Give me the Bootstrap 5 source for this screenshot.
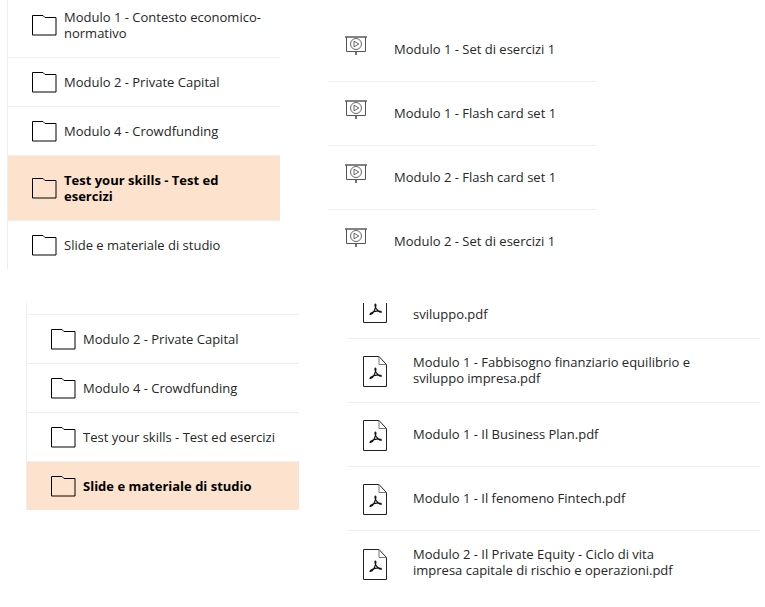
<!DOCTYPE html>
<html lang="it">
<head>
  <meta charset="UTF-8" />
  <meta name="viewport" content="width=device-width, initial-scale=1.0" />
  <title>Materiali del corso</title>
  <link href="https://cdn.jsdelivr.net/npm/bootstrap@5.3.3/dist/css/bootstrap.min.css" rel="stylesheet" />
  <style>
    body {
      background: #fff;
      font-family: "Open Sans", "Liberation Sans", sans-serif;
      font-size: 13px;
      line-height: 16px;
      color: #262626;
      overflow: hidden;
    }

    .collage { height: 607px; overflow: hidden; }
    .col-left { width: 292px; margin-left: 7px; flex: none; }
    .col-right { margin-left: 29px; flex: none; }

    /* pannelli */
    .panel-a { width: 273px; margin-top: -7px; border-left: 1px solid #eee; }
    .panel-b { width: 273px; margin-left: 19px; margin-top: 34px; border-left: 1px solid #eee; }
    .panel-c { width: 268px; margin-top: 18px; }
    .panel-d { width: 413px; margin-left: 19px; margin-top: 29px; }

    .row-item {
      display: flex;
      align-items: center;
      background: transparent;
      color: #262626;
      border: 0;
      border-bottom: 1px solid #eee;
      border-radius: 0;
      padding: 16px 10px 16px 24px;
    }
    .row-item.is-active { background: #fde3cd; color: #000; font-weight: 700; }
    .row-stub { height: 12px; border-bottom: 1px solid #eee; }

    .icon-folder { width: 25px; height: 21px; flex: none; margin: -3px 7px -3px 0; }

    .row-tool { height: 64px; padding: 0 0 2px 17px; }
    .icon-tool { width: 24px; height: 20px; flex: none; margin-right: 26px; margin-top: -6px; margin-left: -1px; }

    .row-pdf { height: 64px; padding: 0 0 2px 16px; }
    .icon-pdf { width: 24px; height: 31px; flex: none; margin: 4px 26px 0 0; }
    .pdf-text { max-width: 288px; }
    .pdf-tail { padding-top: 18px; }
    .clip-first { height: 36px; overflow: hidden; border-bottom: 1px solid #eee; }
    .clip-first .row-pdf { margin-top: -29px; border-bottom: 0; }
  </style>
</head>
<body>

<svg class="d-none" xmlns="http://www.w3.org/2000/svg">
  <symbol id="folder" viewBox="0 0 25 21">
    <path d="M.5.5H11L13 2.500H24V20H.5Z" fill="none" stroke="#000" />
  </symbol>
  <symbol id="tool" viewBox="0 0 24 20">
    <path d="M1 1H23" stroke="#333" stroke-width="1.2" />
    <path d="M2.500 1V15.500H21.500V1" fill="none" stroke="#555" />
    <circle cx="12" cy="8" r="5.500" fill="none" stroke="#666" />
    <path d="M10 5.200V10.800L14.800 8Z" fill="none" stroke="#555" stroke-width=".9" />
    <path d="M12 16V19" stroke="#333" stroke-width="1.4" />
  </symbol>
  <symbol id="pdf" viewBox="0 0 24 31">
    <path d="M.5.5H16L23.500 8.500V30.500H.5Z" fill="none" stroke="#222" />
    <path d="M16 .5V8.500H23.500" fill="none" stroke="#777" />
    <path d="M7.500 22.500C9 22 11.500 19 12.500 15.500C12 14 11.500 12.500 12.300 12C13.200 12.300 13 14 12.500 15.500C13.500 17.500 15 18.800 16 19C17.500 19.200 18.500 19.300 18.500 20C17.500 20.800 16 19.800 15 18.900C12.500 19 9.500 19.800 7.500 21.500C7 22 7 22.700 7.500 22.500Z" fill="none" stroke="#111" stroke-width="1.1" stroke-linejoin="round" />
  </symbol>
</svg>

<div class="collage d-flex">
  <div class="col-left">
    <div class="panel-a list-group list-group-flush">
      <a class="list-group-item row-item"><svg class="icon-folder"><use href="#folder" /></svg><span>Modulo 1 - Contesto economico-normativo</span></a>
      <a class="list-group-item row-item"><svg class="icon-folder"><use href="#folder" /></svg><span>Modulo 2 - Private Capital</span></a>
      <a class="list-group-item row-item"><svg class="icon-folder"><use href="#folder" /></svg><span>Modulo 4 - Crowdfunding</span></a>
      <a class="list-group-item row-item is-active"><svg class="icon-folder"><use href="#folder" /></svg><span>Test your skills - Test ed esercizi</span></a>
      <a class="list-group-item row-item"><svg class="icon-folder"><use href="#folder" /></svg><span>Slide e materiale di studio</span></a>
    </div>
    <div class="panel-b list-group list-group-flush">
      <div class="row-stub"></div>
      <a class="list-group-item row-item"><svg class="icon-folder"><use href="#folder" /></svg><span>Modulo 2 - Private Capital</span></a>
      <a class="list-group-item row-item"><svg class="icon-folder"><use href="#folder" /></svg><span>Modulo 4 - Crowdfunding</span></a>
      <a class="list-group-item row-item"><svg class="icon-folder"><use href="#folder" /></svg><span>Test your skills - Test ed esercizi</span></a>
      <a class="list-group-item row-item is-active"><svg class="icon-folder"><use href="#folder" /></svg><span>Slide e materiale di studio</span></a>
    </div>
  </div>
  <div class="col-right">
    <div class="panel-c list-group list-group-flush">
      <a class="list-group-item row-item row-tool"><svg class="icon-tool"><use href="#tool" /></svg><span>Modulo 1 - Set di esercizi 1</span></a>
      <a class="list-group-item row-item row-tool"><svg class="icon-tool"><use href="#tool" /></svg><span>Modulo 1 - Flash card set 1</span></a>
      <a class="list-group-item row-item row-tool"><svg class="icon-tool"><use href="#tool" /></svg><span>Modulo 2 - Flash card set 1</span></a>
      <a class="list-group-item row-item row-tool"><svg class="icon-tool"><use href="#tool" /></svg><span>Modulo 2 - Set di esercizi 1</span></a>
    </div>
    <div class="panel-d list-group list-group-flush">
      <div class="clip-first">
        <a class="list-group-item row-item row-pdf"><svg class="icon-pdf"><use href="#pdf" /></svg><span class="pdf-text pdf-tail">sviluppo.pdf</span></a>
      </div>
      <a class="list-group-item row-item row-pdf"><svg class="icon-pdf"><use href="#pdf" /></svg><span class="pdf-text">Modulo 1 - Fabbisogno finanziario equilibrio e sviluppo impresa.pdf</span></a>
      <a class="list-group-item row-item row-pdf"><svg class="icon-pdf"><use href="#pdf" /></svg><span class="pdf-text">Modulo 1 - Il Business Plan.pdf</span></a>
      <a class="list-group-item row-item row-pdf"><svg class="icon-pdf"><use href="#pdf" /></svg><span class="pdf-text">Modulo 1 - Il fenomeno Fintech.pdf</span></a>
      <a class="list-group-item row-item row-pdf"><svg class="icon-pdf"><use href="#pdf" /></svg><span class="pdf-text">Modulo 2 - Il Private Equity - Ciclo di vita impresa capitale di rischio e operazioni.pdf</span></a>
    </div>
  </div>
</div>

<script src="https://cdn.jsdelivr.net/npm/bootstrap@5.3.3/dist/js/bootstrap.bundle.min.js"></script>
</body>
</html>
